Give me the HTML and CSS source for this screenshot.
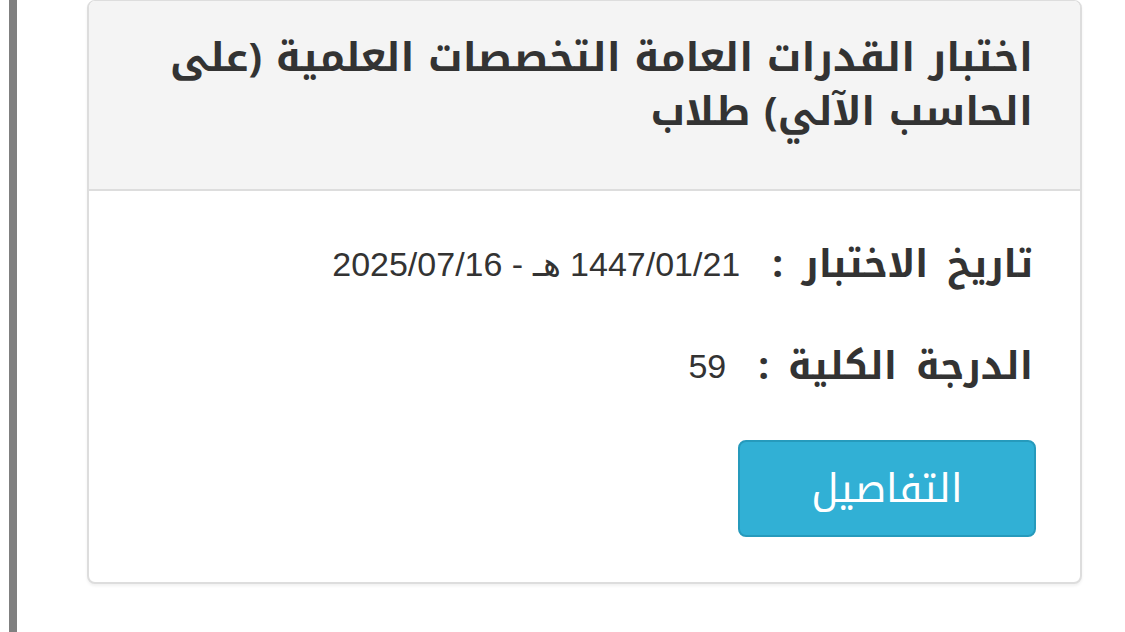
FILE: index.html
```html
<!DOCTYPE html>
<html lang="ar" dir="rtl">
<head>
  <meta charset="UTF-8" />
  <title>نتائج الاختبارات</title>
  <meta name="viewport" content="width=device-width, initial-scale=1.0" />
  <link rel="stylesheet" href="styles.css">
</head>
<body>
  <div class="page">
    <div class="exam-card">
      <div class="exam-head">
        <h2>اختبار القدرات العامة التخصصات العلمية (على الحاسب الآلي) طلاب</h2>
      </div>
      <div class="exam-body">
        <div class="exam-row">
          <span class="label">تاريخ الاختبار :</span>
          <span class="value">1447/01/21 هـ - 2025/07/16</span>
        </div>
        <div class="exam-row">
          <span class="label">الدرجة الكلية :</span>
          <span class="value">59</span>
        </div>
        <button class="btn-info">التفاصيل</button>
      </div>
    </div>
  </div>
</body>
</html>
```

FILE: styles.css
```css
html, body {
  margin: 0;
  padding: 0;
  height: 100%;
  background-color: #fff;
  font-family: "Noto Kufi Arabic", "Droid Arabic Kufi", "DejaVu Sans", sans-serif;
  color: #333;
  overflow: hidden;
}

.page {
  height: 100%;
  display: flex;
  padding-left: 9px;
  padding-right: 43px;
  box-sizing: border-box;
}

/* gray rail on the left side of the page */
.page::after {
  content: "";
  order: 2;
  width: 8px;
  margin-right: 70px;
  background-color: #808080;
  flex-shrink: 0;
}

.exam-card {
  flex: 1;
  align-self: flex-start;
  border: 2px solid #ddd;
  border-top-width: 1px;
  border-radius: 8px;
  background-color: #fff;
  box-shadow: 0 2px 3px rgba(0, 0, 0, 0.06);
  overflow: hidden;
}

.exam-head {
  background-color: #f4f4f4;
  border-bottom: 2px solid #ddd;
  padding: 30px 47px 0 40px;
  height: 158px;
}

.exam-head h2 {
  margin: 0;
  font-size: 40px;
  font-weight: bold;
  line-height: 54px;
  color: #333;
}

.exam-body {
  padding: 42px 47px 45px;
}

.exam-row {
  display: flex;
  align-items: center;
  gap: 32px;
  height: 62px;
  margin-bottom: 40px;
}

.label {
  font-size: 38px;
  font-weight: bold;
  word-spacing: 6px;
  color: #333;
}

.value {
  font-family: "Liberation Sans", Arial, sans-serif;
  font-size: 34px;
  color: #333;
}

.btn-info {
  display: block;
  width: 298px;
  height: 97px;
  margin-top: 43px;
  margin-right: -3px;
  padding: 0;
  font-family: inherit;
  font-size: 40px;
  color: #fff;
  background-color: #31b0d5;
  border: 2px solid #269abc;
  border-radius: 8px;
  cursor: pointer;
}
```
